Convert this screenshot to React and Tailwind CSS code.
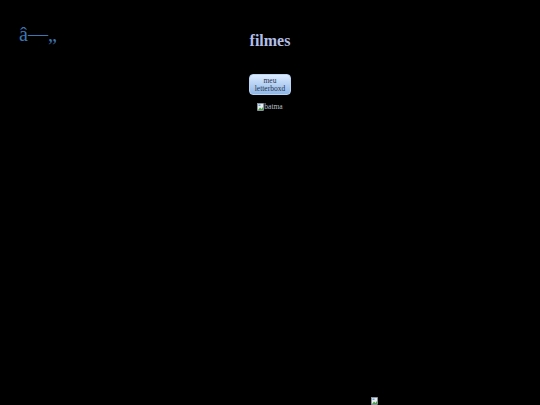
import React from "react";

function BrokenIcon() {
  return (
    <svg width="7" height="8" viewBox="0 0 7 8" className="shrink-0">
      <rect x="0.5" y="0.5" width="6" height="7" fill="#e8ecef" stroke="#9aa4ad" strokeWidth="0.6" />
      <path d="M1 7 L3 4.5 L4.5 6 L6 4 L6 7 Z" fill="#4aa04a" />
      <rect x="1.5" y="1.5" width="2" height="1.5" fill="#6aa0d8" />
    </svg>
  );
}

export default function App() {
  return (
    <div
      className="w-[540px] h-[405px] overflow-hidden bg-black flex flex-col"
      style={{ fontFamily: '"Liberation Serif", "Times New Roman", serif' }}
    >
      <div className="grid grid-cols-[1fr_auto_1fr] items-start pt-[21px]">
        <div className="pl-[19px] text-[20px] leading-[26px] text-[#3d76b2]">â—„</div>
        <h1 className="mt-[11px] text-[16px] leading-[18px] font-bold text-[#b2bee6]">filmes</h1>
        <div />
      </div>
      <div className="flex justify-center mt-[24px]">
        <button className="w-[42px] h-[21px] rounded-[4px] border border-[#b9d4f2] bg-gradient-to-b from-[#dcecff] to-[#8fb6e6] text-[7.5px] leading-[8px] text-[#2a3550] flex flex-col items-center justify-center">
          <span>meu</span>
          <span>letterboxd</span>
        </button>
      </div>
      <div className="flex justify-center mt-[8px]">
        <div className="flex items-center">
          <BrokenIcon />
          <span className="text-[7.5px] leading-[8px] text-[#b8bcc4]">batma</span>
        </div>
      </div>
      <div className="mt-[286px] ml-[371px]">
        <BrokenIcon />
      </div>
    </div>
  );
}
